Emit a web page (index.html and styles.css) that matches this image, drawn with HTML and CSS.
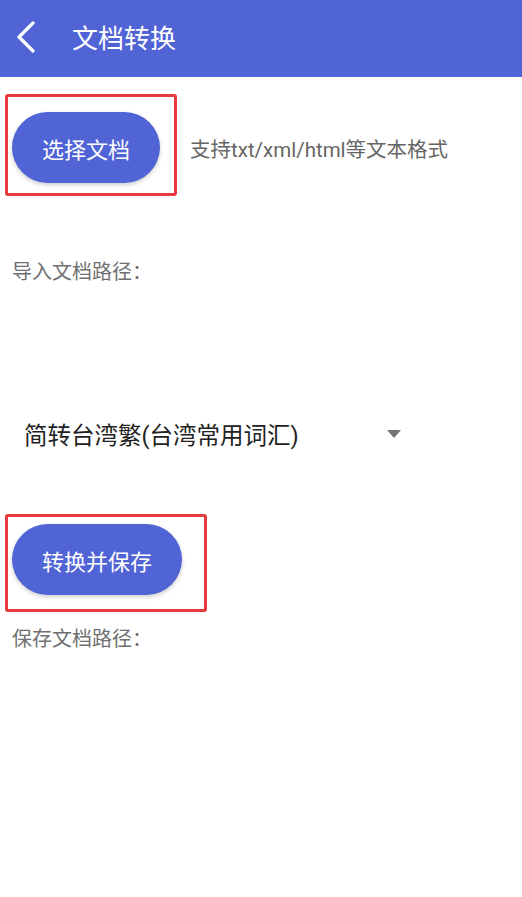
FILE: index.html
```html
<!DOCTYPE html>
<html lang="zh-CN">
<head>
    <meta charset="UTF-8">
    <meta name="viewport" content="width=device-width, initial-scale=1.0">
    <title>文档转换</title>
    <link rel="stylesheet" href="styles.css">
</head>
<body>
    <header class="toolbar">
        <svg class="back" width="24" height="36" viewBox="0 0 24 36">
            <polyline points="17,2 3,16 17,30" fill="none" stroke="#fff" stroke-width="3.2" stroke-linecap="round" stroke-linejoin="round"/>
        </svg>
        <h1>文档转换</h1>
    </header>

    <div class="content">
        <div class="pick-row">
            <div class="mark mark-pick">
                <button class="pill">选择文档</button>
            </div>
            <span class="hint">支持txt/xml/html等文本格式</span>
        </div>

        <p class="path path-in">导入文档路径：</p>

        <div class="spinner">
            <span>简转台湾繁(台湾常用词汇)</span>
            <span class="arrow"></span>
        </div>

        <div class="mark mark-save">
            <button class="pill">转换并保存</button>
        </div>

        <p class="path path-out">保存文档路径：</p>
    </div>
</body>
</html>
```

FILE: styles.css
```css
body {
    margin: 0;
    font-family: 'Roboto', 'Noto Sans CJK SC', sans-serif;
    background: #fff;
    color: #222;
}
.toolbar {
    height: 77px;
    background-color: #5064d6;
    display: flex;
    align-items: center;
    padding-left: 16px;
    box-sizing: border-box;
}
.back {
    display: block;
    margin-top: 1px;
}
.toolbar h1 {
    margin: 0 0 0 32px;
    color: #fff;
    font-size: 26px;
    font-weight: normal;
    line-height: 1;
}
.content {
    padding: 0 12px;
}
.pick-row {
    display: flex;
    align-items: center;
    margin-top: 35px;
}
.mark {
    position: relative;
    display: inline-block;
}
.mark::after {
    content: '';
    position: absolute;
    border: 3px solid #e63a3d;
    border-radius: 3px;
}
.mark-pick::after {
    left: -7px;
    top: -18px;
    right: -17px;
    bottom: -13px;
}
.mark-save {
    display: block;
    width: max-content;
    margin-top: 66px;
}
.mark-save::after {
    left: -7px;
    top: -10px;
    right: -25px;
    bottom: -17px;
}
.pill {
    height: 71px;
    padding: 0 30px;
    border: none;
    border-radius: 36px;
    background-color: #5064d6;
    color: #fff;
    font-family: inherit;
    font-size: 22px;
    box-shadow: 0 2px 4px rgba(0, 0, 0, 0.2);
}
.hint {
    margin-left: 30px;
    font-size: 20.5px;
    color: #666;
}
.path {
    margin: 0;
    font-size: 20px;
    line-height: 24px;
    color: #707070;
}
.path-in {
    margin-top: 77px;
}
.path-out {
    margin-top: 32px;
}
.spinner {
    display: flex;
    align-items: center;
    width: 389px;
    height: 48px;
    margin-top: 126px;
    padding-left: 12px;
    box-sizing: border-box;
    font-size: 23.5px;
    color: #222;
}
.spinner span:first-child {
    flex: 1;
}
.arrow {
    width: 0;
    height: 0;
    border-left: 7.5px solid transparent;
    border-right: 7.5px solid transparent;
    border-top: 8px solid #757575;
    margin-top: 0;
}
```
